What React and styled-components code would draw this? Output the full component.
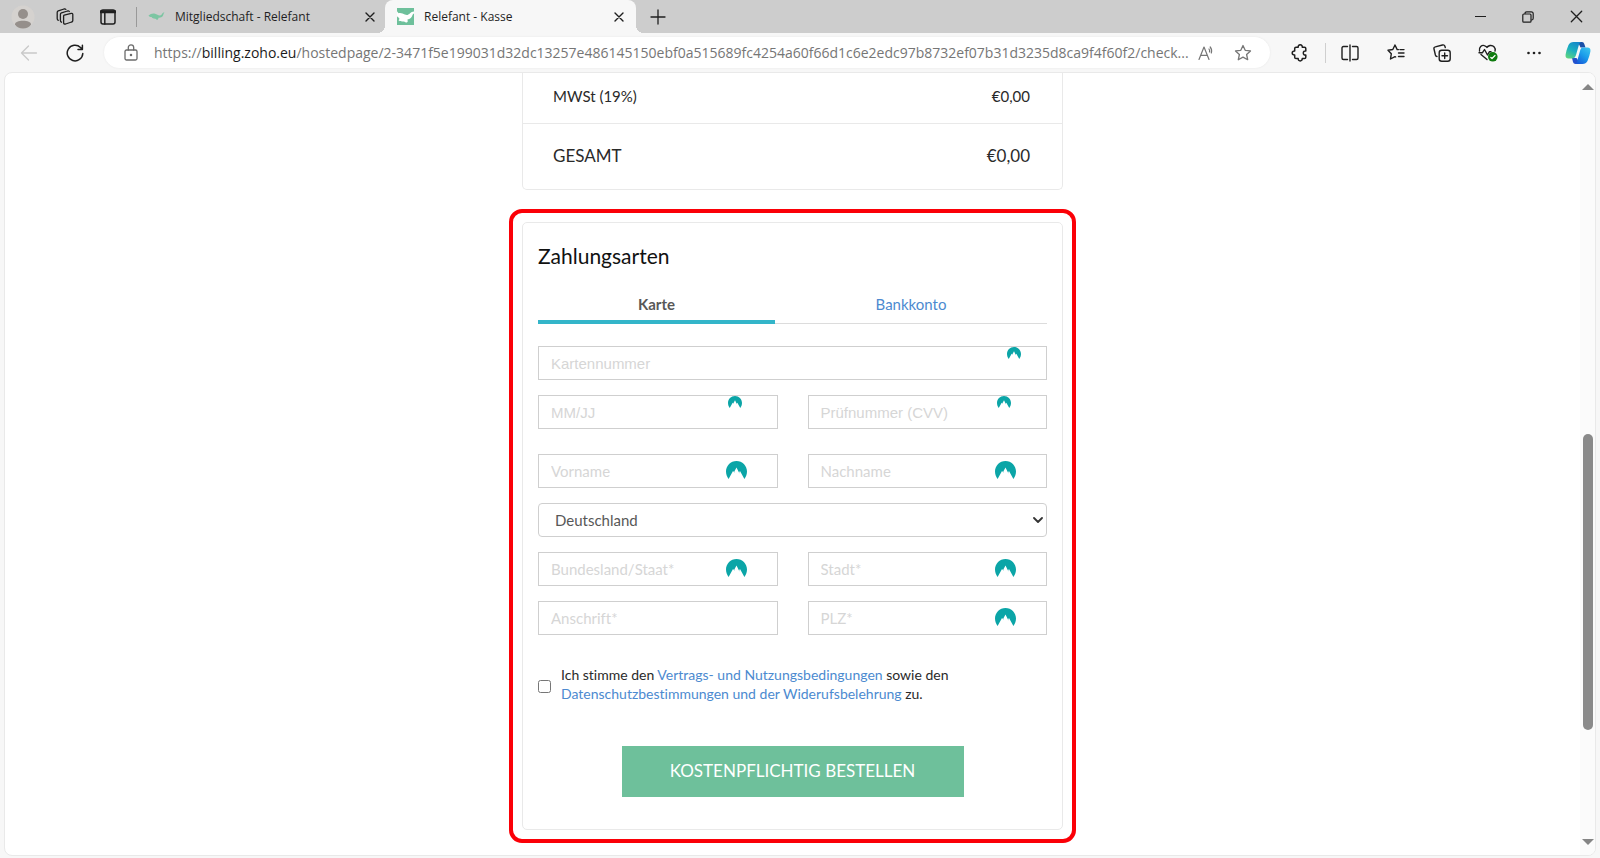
import React from 'react';
import styled, { createGlobalStyle } from 'styled-components';

const Global = createGlobalStyle`
  * { box-sizing: border-box; }
  body { margin: 0; background: #f7f7f7; }
  button, input, select { font: inherit; color: inherit; }
  svg { display: block; }
`;

const ui = '"Open Sans", "Noto Sans", sans-serif';
const text = 'Lato, "Open Sans", sans-serif';

const Window = styled.div`
  min-height: 100vh;
  display: flex;
  flex-direction: column;
  background: #f7f7f7;
  padding-bottom: 2px;
  font-family: ${ui};
`;

const TitleBar = styled.header`
  display: flex;
  height: 33px;
  background: #cdcdcd;
  color: #1f1f1f;
`;

const IconButton = styled.button`
  flex: none;
  width: ${(p) => p.$w || 46}px;
  display: flex;
  align-items: center;
  justify-content: center;
  border: 0;
  padding: 0;
  background: none;
  color: ${(p) => p.$color || '#1f1f1f'};
`;

const Divider = styled.span`
  flex: none;
  align-self: center;
  width: 1px;
  height: 20px;
  background: ${(p) => p.$color};
  margin: ${(p) => p.$margin};
`;

const Tab = styled.div`
  position: relative;
  display: flex;
  align-items: center;
  width: ${(p) => (p.$active ? 251 : 247)}px;
  padding: ${(p) => (p.$active ? '0 2px 0 12px' : '0 0 0 10px')};
  background: ${(p) => (p.$active ? '#f7f7f7' : 'transparent')};
  border-radius: 8px 8px 0 0;
  font-size: 12px;

  &::before,
  &::after {
    content: ${(p) => (p.$active ? '""' : 'none')};
    position: absolute;
    bottom: 0;
    width: 8px;
    height: 8px;
  }
  &::before {
    left: -8px;
    background: radial-gradient(circle at 0 0, transparent 8px, #f7f7f7 8px);
  }
  &::after {
    right: -8px;
    background: radial-gradient(circle at 100% 0, transparent 8px, #f7f7f7 8px);
  }
`;

const TabTitle = styled.span`
  flex: 1;
  min-width: 0;
  margin-left: 10px;
  white-space: nowrap;
  overflow: hidden;
`;

const WindowButtons = styled.div`
  display: flex;
  margin-left: auto;
`;

const Toolbar = styled.div`
  display: flex;
  height: 39px;
  padding: 0 1px 0 5px;
`;

const AddressBar = styled.div`
  flex: 1;
  min-width: 0;
  display: flex;
  align-self: center;
  height: 31px;
  margin: 0 7px 0 6px;
  padding-left: 13px;
  border-radius: 16px;
  background: #fff;
  box-shadow: 0 0 2px #e4e4e4;
`;

const Url = styled.div`
  flex: 1;
  min-width: 0;
  margin-left: 9px;
  line-height: 31px;
  font-size: 14px;
  white-space: nowrap;
  overflow: hidden;
  color: #767676;
`;

const Host = styled.span`
  color: #1b1b1b;
`;

const Pane = styled.div`
  flex: 1;
  display: flex;
  margin: 0 4px;
  border: 1px solid #e9e9e9;
  border-radius: 8px;
  background: #fff;
  overflow: hidden;
`;

const Content = styled.main`
  flex: 1;
  display: flex;
  flex-direction: column;
  align-items: center;
  padding-bottom: 11px;
  font-family: ${text};
  font-size: 15px;
  font-variant-ligatures: none;
  color: #2a2a2a;
`;

const ScrollTrack = styled.div`
  flex: none;
  width: 15px;
  display: flex;
  flex-direction: column;
  align-items: center;
  background: #fbfbfb;
  padding: 11px 0 10px;
`;

const ScrollSpace = styled.div`
  flex: ${(p) => p.$grow};
`;

const ScrollThumb = styled.div`
  flex: 296;
  width: 10px;
  border-radius: 5px;
  background: #8a8a8a;
`;

const Totals = styled.dl`
  width: 541px;
  margin: 0;
  border: 1px solid #e9e9e9;
  border-top: 0;
  border-radius: 0 0 5px 5px;
`;

const TotalRow = styled.div`
  display: flex;
  justify-content: space-between;
  align-items: center;
  padding: ${(p) => (p.$large ? '20px 32px 21px 30px' : '11px 32px 15px 30px')};
  border-top: ${(p) => (p.$large ? '1px solid #e9e9e9' : '0')};
  font-size: ${(p) => (p.$large ? 17 : 15)}px;
  line-height: 24px;

  dd { margin: 0; }
`;

const Highlight = styled.section`
  width: 567px;
  margin-top: 19px;
  padding: 9px;
  border: 4px solid #fb0007;
  border-radius: 13px;
`;

const Card = styled.form`
  display: flex;
  flex-direction: column;
  border: 1px solid #e9e9e9;
  border-radius: 5px;
  padding: 19px 15px 32px;
`;

const Title = styled.h2`
  margin: 0;
  font-size: 21px;
  line-height: 28px;
  font-weight: 400;
  color: #111;
`;

const PayTabs = styled.div`
  display: grid;
  grid-template-columns: 237fr 272fr;
  height: 36px;
  margin: 18px 0 22px;
  border-bottom: 1px solid #dcdcdc;
`;

const PayTab = styled.button`
  height: 36px;
  border: 0;
  border-bottom: 4px solid ${(p) => (p.$active ? '#33b5c9' : 'transparent')};
  padding: 0;
  background: none;
  font-weight: ${(p) => (p.$active ? 700 : 400)};
  color: ${(p) => (p.$active ? '#585858' : '#4c8ad0')};
`;

const Fields = styled.div`
  display: grid;
  grid-template-columns: 1fr 1fr;
  gap: 15px 30px;
  margin-bottom: ${(p) => p.$after}px;
`;

const Cell = styled.div`
  position: relative;
  grid-column: ${(p) => (p.$wide ? '1 / -1' : 'auto')};
`;

const Input = styled.input`
  display: block;
  width: 100%;
  height: 34px;
  border: 1px solid #cfcfcf;
  border-radius: 0;
  padding: 0 12px;
  background: #fff;
  font-family: ${(p) => (p.$secure ? '"Liberation Sans", Arial, sans-serif' : text)};

  &::placeholder { color: #d6d6d6; opacity: 1; }
`;

const Select = styled.select`
  appearance: none;
  display: block;
  width: 100%;
  height: 34px;
  border: 1px solid #cfcfcf;
  border-radius: 4px;
  padding: 0 16px;
  background: #fff;
  color: #585858;
`;

const Badge = styled.span`
  position: absolute;
  top: ${(p) => p.$top}px;
  right: ${(p) => p.$right}px;
  pointer-events: none;
`;

const Terms = styled.div`
  display: flex;
  align-items: center;
  gap: 10px;
  margin: 30px 0 43px;
  font-size: 14px;
  line-height: 19px;

  input { flex: none; width: 13px; height: 13px; margin: 5px 0 0; }
  a { color: #4c8ad0; text-decoration: none; }
`;

const Submit = styled.button`
  align-self: center;
  width: 342px;
  height: 51px;
  border: 0;
  padding: 0 0 2px;
  background: #6ec09b;
  color: #fff;
  font-size: 17px;
`;

const Svg = ({ w = 20, h = w, box, children, ...rest }) => (
  <svg width={w} height={h} viewBox={box || `0 0 ${w} ${h}`} fill="none" stroke="currentColor"
    strokeWidth="1.3" strokeLinecap="round" strokeLinejoin="round" aria-hidden="true" {...rest}>
    {children}
  </svg>
);

const Cross = ({ size }) => (
  <Svg w={size} box="0 0 10 10" strokeWidth={size > 10 ? 1 : 1.4}><path d="M1 1l8 8M9 1l-8 8" /></Svg>
);

const Favicon = ({ filled }) =>
  filled ? (
    <Svg w={17} stroke="none">
      <path fill="#6ec09b" d="M0 0h17v17H0z" />
      <path fill="#fff" d="M0 3.200L1.500 5.200C3 4.800 4.200 5 5.500 5.600C7.500 6.300 9.500 7.600 11 6.800C13 5.900 13.300 4 17 3.600V5.500C15.500 5.600 15.500 8.200 14 9.800C12.800 11 11.500 11.300 10.500 11.500C10.300 12.700 11.800 13.600 9.500 14.500C8.300 14.500 8 13.300 6.500 13.400C4.500 13.600 2.300 13.300 1.500 12.300C2.300 11.500 3 10.500 1.800 9.700C.8 9.300.3 8.600 0 8Z" />
    </Svg>
  ) : (
    <Svg w={17} stroke="none">
      <path fill="#7cc5a2" d="M.5 7.500C2.500 5.800 5 5 7 5.700C9 6.300 10.300 7.700 12 7.500C14 7.300 14.200 4.500 16.500 4.300C15.300 5.200 15.600 7.600 14.200 8.700C13 9.600 11.500 9.500 10.500 9.700C10.500 10.800 9.800 11.600 8.800 12C8.400 11.300 8.300 10.800 7.400 10.700C5.500 10.800 4.300 10 3.500 9C2.200 9 1.200 8.500.5 7.500Z" />
    </Svg>
  );

const Peak = ({ small }) => (
  <Svg w={small ? 14 : 21} h={small ? 12 : 18} box="0 0 21 18" stroke="none">
    <path fill="#0ba5a7" d="M2.600 18C1 15.900 0 13.400 0 10.600C0 4.700 4.700 0 10.500 0S21 4.700 21 10.600C21 13.400 20 15.900 18.400 18L14 10L13.200 11.200L13.600 12.800L10.500 6.500L8.300 10.600L8.700 11.800L7 10Z" />
  </Svg>
);

const ArrowHead = ({ down }) => (
  <Svg w={12} h={6} stroke="none"><path fill="#858585" d={down ? 'M0 0h12L6 6z' : 'M0 6h12L6 0z'} /></Svg>
);

const Field = ({ name, wide, icon }) => {
  const secure = icon === 'small';
  return (
    <Cell $wide={wide}>
      <Input type="text" aria-label={name} placeholder={name} $secure={secure} />
      {icon && (
        <Badge $top={secure ? 1 : 7} $right={secure ? (wide ? 26 : 36) : 31}>
          <Peak small={secure} />
        </Badge>
      )}
    </Cell>
  );
};

const star = 'M9 1.500L11.200 6.300L16.500 6.900L12.600 10.500L13.700 15.700L9 13.100L4.300 15.700L5.400 10.500L1.500 6.900L6.800 6.300Z';

export default function App() {
  return (
    <Window>
      <Global />
      <TitleBar>
        <IconButton $w={46} aria-label="Profil">
          <Svg w={24} stroke="none">
            <circle cx="12" cy="12" r="11.500" fill="#d5d2cf" />
            <circle cx="12" cy="9" r="5" fill="#958f8b" />
            <path fill="#958f8b" d="M4 19.500C4 17 7.500 15.800 12 15.800S20 17 20 19.500C18.500 22 15.500 23.500 12 23.500S5.500 22 4 19.500Z" />
          </Svg>
        </IconButton>
        <IconButton $w={38} aria-label="Arbeitsbereiche">
          <Svg w={18}>
            <path d="M8.200 7.200L15.200 5.400Q16.800 5 16.800 6.600V12.500Q16.800 13.700 15.600 14L9.600 16Q7.600 16.500 7.600 14.500V8.200Q7.600 7.400 8.200 7.200Z" />
            <path d="M5.500 14.200Q4.400 13.700 4.400 12.500V6.500Q4.400 5.300 5.500 4.900L11.500 3Q12.800 2.700 13.300 3.500" />
            <path d="M2.300 12.300Q1.200 11.800 1.200 10.500V4.500Q1.200 3.300 2.300 2.900L8 1Q9.200.7 9.800 1.400" />
          </Svg>
        </IconButton>
        <IconButton $w={48} aria-label="Tabaktionen">
          <Svg w={16} strokeWidth="1.500">
            <rect x="1" y="1" width="14" height="14" rx="2" />
            <path d="M1 2.800h14" strokeWidth="3" /><path d="M4.800 4v11" />
          </Svg>
        </IconButton>
        <Divider $color="#999" $margin="0 1px 0 4px" />
        <Tab>
          <Favicon />
          <TabTitle>Mitgliedschaft - Relefant</TabTitle>
          <IconButton $w={30} aria-label="Tab schließen"><Cross size={10} /></IconButton>
        </Tab>
        <Tab $active>
          <Favicon filled />
          <TabTitle>Relefant - Kasse</TabTitle>
          <IconButton $w={30} aria-label="Tab schließen"><Cross size={10} /></IconButton>
        </Tab>
        <IconButton $w={44} aria-label="Neuer Tab">
          <Svg w={16} strokeWidth="1.300"><path d="M8 1v14M1 8h14" /></Svg>
        </IconButton>
        <WindowButtons>
          <IconButton $w={48} aria-label="Minimieren"><Svg w={11} strokeWidth="1"><path d="M0 5.500h11" /></Svg></IconButton>
          <IconButton $w={48} aria-label="Verkleinern">
            <Svg w={12} strokeWidth="1.200">
              <rect x=".8" y="3" width="8.200" height="8.200" rx="1" />
              <path d="M3 2.600Q3 .8 4.800.8H9.200Q11.200.8 11.200 2.800V7.200Q11.200 9 9.500 9" />
            </Svg>
          </IconButton>
          <IconButton $w={48} aria-label="Schließen"><Cross size={13} /></IconButton>
        </WindowButtons>
      </TitleBar>

      <Toolbar>
        <IconButton $w={47} $color="#c9c9c9" aria-label="Zurück">
          <Svg w={18}><path d="M16.500 9H1.500M8.500 2L1.500 9l7 7" /></Svg>
        </IconButton>
        <IconButton aria-label="Aktualisieren">
          <Svg w={18} strokeWidth="1.500"><path d="M16.800 9.500A7.800 7.800 0 1 1 14.500 3.500L16.200 5.200M16.400 1.200V5.500H12" /></Svg>
        </IconButton>
        <AddressBar>
          <IconButton $w={28} $color="#6b6b6b" aria-label="Websiteinformationen">
            <Svg w={14} h={17}>
              <rect x="1" y="6" width="12" height="10" rx="1.500" />
              <path d="M4.300 6V3.500a2.700 2.700 0 0 1 5.400 0V6" />
              <circle cx="7" cy="11" r=".6" fill="currentColor" />
            </Svg>
          </IconButton>
          <Url role="textbox" aria-label="Adresse">
            https://<Host>billing.zoho.eu</Host>/hostedpage/2-3471f5e199031d32dc13257e486145150ebf0a515689fc4254a60f66d1c6e2edc97b8732ef07b31d3235d8ca9f4f60f2/check...
          </Url>
          <IconButton $w={20} $color="#767676" aria-label="Laut vorlesen">
            <Svg w={17} h={16} strokeWidth="1.200">
              <path d="M1 14.500L6 2L11 14.500M2.700 10.300H9.300M11 4Q12 5.300 11.500 7M12.200 2Q14.300 4.500 13.300 8" />
            </Svg>
          </IconButton>
          <IconButton $w={54} $color="#767676" aria-label="Zu Favoriten hinzufügen"><Svg w={18}><path d={star} /></Svg></IconButton>
        </AddressBar>
        <IconButton aria-label="Erweiterungen">
          <Svg w={18} strokeWidth="1.500">
            <path d="M5 3.200H7.200Q7 .8 9.200.8T11.300 3.200H13.500Q14.800 3.200 14.800 4.500V7Q12.300 6.600 12.300 9T14.800 11V13.300Q14.800 14.600 13.500 14.600H11.300Q11.300 16.900 9.200 16.900T7.200 14.600H5Q3.700 14.600 3.700 13.300V11Q1.200 11 1.200 9T3.700 7V4.500Q3.700 3.200 5 3.200Z" />
          </Svg>
        </IconButton>
        <Divider $color="#cfcfcf" $margin="0 1px 0 2px" />
        <IconButton aria-label="Bildschirm teilen">
          <Svg w={18} strokeWidth="1.400">
            <path d="M6.500 2.500H2.500Q1 2.500 1 4V14Q1 15.500 2.500 15.500H6.500M11.500 2.500H15.500Q17 2.500 17 4V14Q17 15.500 15.500 15.500H11.500M9 1V17" />
          </Svg>
        </IconButton>
        <IconButton aria-label="Favoriten">
          <Svg w={18} h={17} strokeWidth="1.400">
            <path d="M11.500 5.600H10.200L8 1L5.800 5.500L1 6.200L4.300 9.800L3.500 15L8 12.600L8.700 13M13 5.600H17M11.500 9H17M11.500 12.500H17" />
          </Svg>
        </IconButton>
        <IconButton aria-label="Sammlungen">
          <Svg w={18} strokeWidth="1.400">
            <rect x="6.200" y="6.200" width="11" height="11" rx="2.500" />
            <path d="M11.700 9V14.500M9 11.700H14.500M4 12.500Q2.800 12.500 2.400 11L1 5Q.6 3.300 2.300 2.900L9.500 1Q11.300.6 11.800 2L12.300 3.500" />
          </Svg>
        </IconButton>
        <IconButton aria-label="Browser-Essentials">
          <Svg w={20} h={18} strokeWidth="1.400">
            <path d="M1.500 7C.6 3 4 .8 6.300 1.600Q8.300 2.200 9 3.500Q9.800 2 12 1.500C15.500 1 18 4 17 7M9 15.500L3 10.500M1 8.700H4.500L6.500 5.500L9.500 11L11.500 7.700H13" />
            <circle cx="14.800" cy="12.800" r="4.800" fill="#0f7b0f" stroke="none" />
            <path d="M12.800 13.500l1.200 1 3-3" stroke="#fff" strokeWidth="1.200" />
          </Svg>
        </IconButton>
        <IconButton aria-label="Einstellungen und mehr">
          <Svg w={14} h={4} stroke="none" fill="currentColor"><circle cx="1.500" cy="2" r="1.300" /><circle cx="7" cy="2" r="1.300" /><circle cx="12.500" cy="2" r="1.300" /></Svg>
        </IconButton>
        <IconButton $w={42} aria-label="Copilot">
          <Svg w={26} h={24} stroke="none">
            <defs>
              <linearGradient id="cpA" x1=".7" y1="0" x2=".2" y2="1"><stop offset="0" stopColor="#1587c9" /><stop offset=".5" stopColor="#1cb0c0" /><stop offset="1" stopColor="#5ed47f" /></linearGradient>
              <linearGradient id="cpB" x1=".9" y1="0" x2=".2" y2="1"><stop offset="0" stopColor="#3cc5ee" /><stop offset=".5" stopColor="#1a9bea" /><stop offset="1" stopColor="#1757d8" /></linearGradient>
            </defs>
            <path fill="#1a4fa8" d="M13 1H17Q18.800 1 19.300 3L20.500 6.500H15.500Z" />
            <path fill="#2450cc" d="M7 17H11.500L13.500 20Q13 23 10.500 23Q8.500 23 8 21Z" />
            <path fill="url(#cpA)" d="M8.500 1H16Q14.500 1.500 14 3.500L11 14Q10 17.500 7 17.500H3.500Q0 17.500.6 13.500Q1.500 8.500 3.500 4Q5 1 8.500 1Z" />
            <path fill="url(#cpB)" d="M17.500 6.500H22.500Q26 6.500 25.400 10.500Q24.500 15.500 22.500 20Q21 23 17.500 23H10Q11.500 22.500 12 20.500L15 10Q15.800 6.500 17.500 6.500Z" />
          </Svg>
        </IconButton>
      </Toolbar>

      <Pane>
        <Content>
          <Totals>
            <TotalRow><dt>MWSt (19%)</dt><dd>€0,00</dd></TotalRow>
            <TotalRow $large><dt>GESAMT</dt><dd>€0,00</dd></TotalRow>
          </Totals>

          <Highlight>
            <Card onSubmit={(e) => e.preventDefault()}>
              <Title>Zahlungsarten</Title>
              <PayTabs role="tablist">
                <PayTab type="button" role="tab" aria-selected="true" $active>Karte</PayTab>
                <PayTab type="button" role="tab" aria-selected="false">Bankkonto</PayTab>
              </PayTabs>
              <Fields $after={25}>
                <Field name="Kartennummer" wide icon="small" />
                <Field name="MM/JJ" icon="small" />
                <Field name="Prüfnummer (CVV)" icon="small" />
              </Fields>
              <Fields $after={0}>
                <Field name="Vorname" icon="large" />
                <Field name="Nachname" icon="large" />
                <Cell $wide>
                  <Select aria-label="Land"><option>Deutschland</option></Select>
                  <Badge $top={14} $right={4}>
                    <Svg w={10} h={7} strokeWidth="1.800" stroke="#333"><path d="M1 1l4 4 4-4" /></Svg>
                  </Badge>
                </Cell>
                <Field name="Bundesland/Staat*" icon="large" />
                <Field name="Stadt*" icon="large" />
                <Field name="Anschrift*" />
                <Field name="PLZ*" icon="large" />
              </Fields>
              <Terms>
                <input type="checkbox" id="terms" />
                <label htmlFor="terms">
                  Ich stimme den <a href="#terms">Vertrags- und Nutzungsbedingungen</a> sowie den{' '}
                  <a href="#privacy">Datenschutzbestimmungen und der Widerufsbelehrung</a> zu.
                </label>
              </Terms>
              <Submit type="submit">KOSTENPFLICHTIG BESTELLEN</Submit>
            </Card>
          </Highlight>
        </Content>
        <ScrollTrack>
          <ArrowHead />
          <ScrollSpace $grow={344} />
          <ScrollThumb />
          <ScrollSpace $grow={109} />
          <ArrowHead down />
        </ScrollTrack>
      </Pane>
    </Window>
  );
}
